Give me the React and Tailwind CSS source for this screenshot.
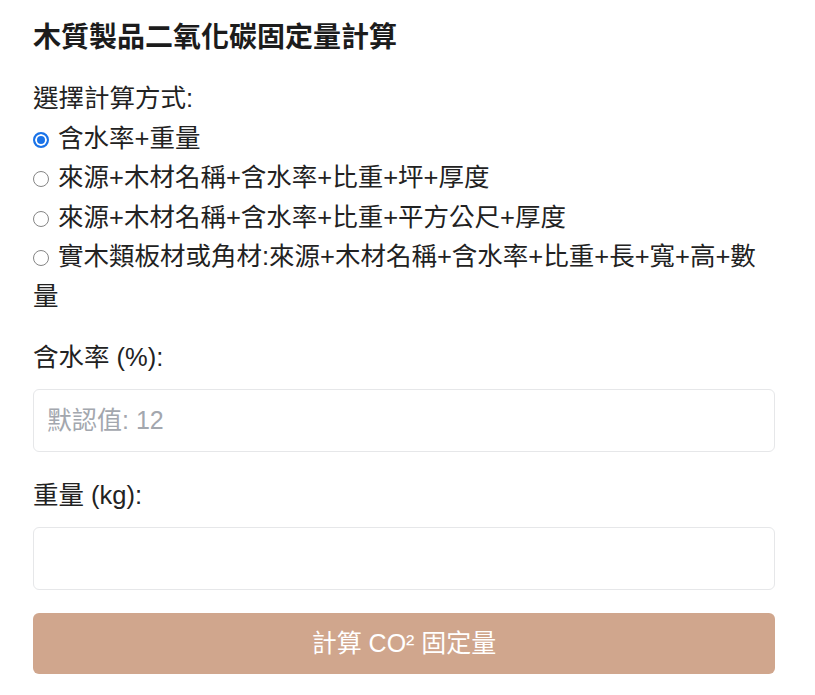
import React from "react";

const options = [
  "含水率+重量",
  "來源+木材名稱+含水率+比重+坪+厚度",
  "來源+木材名稱+含水率+比重+平方公尺+厚度",
  "實木類板材或角材:來源+木材名稱+含水率+比重+長+寬+高+數量",
];

export default function App() {
  const [sel, setSel] = React.useState(0);
  return (
    <div
      className="bg-white min-h-[695px] w-[815px] text-[#222]"
      style={{ fontFamily: '"Liberation Sans", "Noto Sans CJK TC", sans-serif' }}
    >
      <div className="w-[742px] ml-[33px] pt-[20px] flex flex-col">
        <h2 className="text-[28px] leading-[36px] font-bold text-[#1c1c1c] m-0">
          木質製品二氧化碳固定量計算
        </h2>
        <div className="mt-[23px] text-[25.5px] leading-[39.5px]">
          <div>選擇計算方式:</div>
          {options.map((o, i) => (
            <label key={i} className="block cursor-pointer">
              <input
                type="radio"
                name="mode"
                checked={sel === i}
                onChange={() => setSel(i)}
                className="appearance-none inline-block w-[16px] h-[16px] m-0 mr-[9px] align-[-1px] rounded-full border border-[#858585] bg-white checked:border-2 checked:border-[#1a73e8] checked:bg-[#1a73e8] checked:shadow-[inset_0_0_0_2px_white]"
              />
              {o}
            </label>
          ))}
        </div>
        <div className="mt-[21px] text-[25.5px] leading-[40px]">含水率 (%):</div>
        <input
          type="number"
          placeholder="默認值: 12"
          className="mt-[12px] h-[63px] w-full rounded-[6px] border border-[#e6e7e9] px-[13px] text-[25px] outline-none placeholder:text-[#a3a7ae]"
        />
        <div className="mt-[23px] text-[25.5px] leading-[40px]">重量 (kg):</div>
        <input
          type="number"
          className="mt-[12px] h-[63px] w-full rounded-[6px] border border-[#e6e7e9] px-[13px] text-[25px] outline-none"
        />
        <button className="mt-[23px] h-[61px] w-full rounded-[6px] bg-[#d0a68d] text-white text-[25px]">
          計算 CO² 固定量
        </button>
      </div>
    </div>
  );
}
